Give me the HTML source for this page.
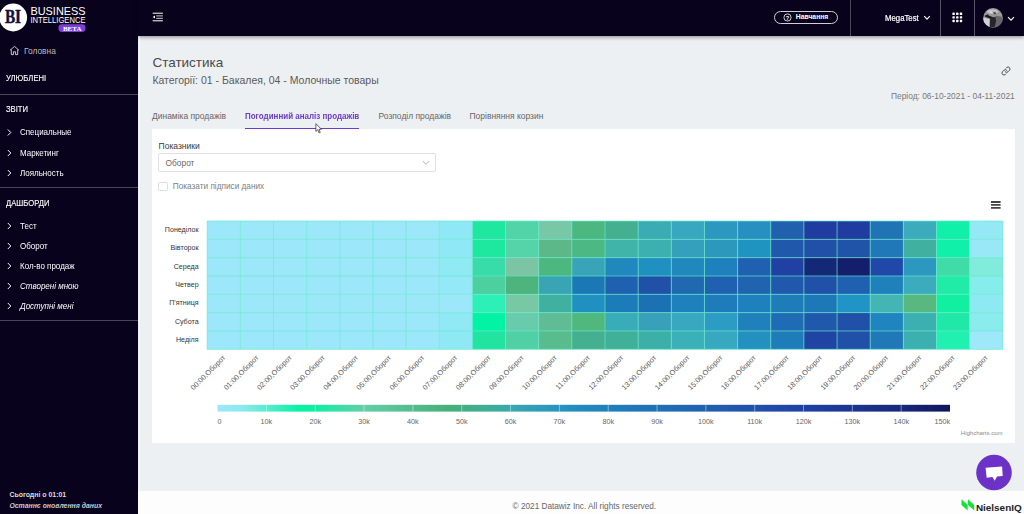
<!DOCTYPE html>
<html lang="uk"><head><meta charset="utf-8"><title>Статистика</title>
<style>
*{box-sizing:border-box;margin:0;padding:0}
html,body{width:1024px;height:514px;overflow:hidden}
body{position:relative;background:#edf0f3;font-family:"Liberation Sans",sans-serif;color:#333;}
.abs{position:absolute;white-space:nowrap}
#side{position:absolute;left:0;top:0;width:138px;height:514px;background:#09021c;color:#fff}
#top{position:absolute;left:138px;top:0;width:886px;height:36px;background:#09021c;box-shadow:0 1px 4px rgba(0,0,0,.45)}
#foot{position:absolute;left:138px;top:490.8px;width:886px;height:24px;background:#fdfdfe}
#card{position:absolute;left:152px;top:129px;width:863.4px;height:314px;background:#fff}
.hm{position:absolute;left:0;top:0}
.yl{font:7.1px "Liberation Sans",sans-serif;fill:#333}
.xl{font:7.35px "Liberation Sans",sans-serif;fill:#555}
.ll{font:7.2px "Liberation Sans",sans-serif;fill:#666}
.hc{font:6px "Liberation Sans",sans-serif;fill:#8a8a8a}
.sep{position:absolute;left:0;width:138px;height:1px;background:#4a4558}
.sh{font-size:8.6px;color:#fff;left:6px;transform:scaleX(.89);transform-origin:0 0;-webkit-text-stroke:.12px #fff}
.si{font-size:8.4px;color:#fff;left:20px;transform:scaleX(.955);transform-origin:0 0;margin-top:-.3px}
.chev{position:absolute;left:7px;width:5px;height:7px}
.tab{font-size:8.47px;color:#666;top:111px}
</style></head><body>

<div id="side">
  <!-- logo -->
  <svg class="abs" style="left:0;top:3px" width="90" height="32" viewBox="0 0 90 32">
    <circle cx="13.2" cy="14.5" r="13.9" fill="#fff"/>
    <text transform="translate(13 20.2) scale(1.02 1.3)" text-anchor="middle" font-family="Liberation Serif,serif" font-weight="bold" font-size="15" fill="#15103a" stroke="#15103a" stroke-width="0.35">BI</text>
    <text x="30.5" y="12" font-family="Liberation Sans,sans-serif" font-size="11.4" fill="#fff" textLength="55" lengthAdjust="spacingAndGlyphs">BUSINESS</text>
    <text x="30.5" y="19.5" font-family="Liberation Sans,sans-serif" font-size="8.8" fill="#fff" textLength="55" lengthAdjust="spacingAndGlyphs">INTELLIGENCE</text>
    <rect x="58.5" y="21.3" width="27" height="7.6" rx="3.4" fill="#7c40d6"/>
    <text x="72.2" y="27.6" text-anchor="middle" font-family="Liberation Serif,serif" font-weight="bold" font-size="7" fill="#fff">BETA</text>
  </svg>
  <svg class="abs" style="left:9px;top:45px" width="11" height="11" viewBox="0 0 11 11"><path d="M1 5.3L5.5 1.4 10 5.3M2.3 4.6V9.6H4.4V6.8H6.6V9.6H8.7V4.6" fill="none" stroke="#ddd" stroke-width="0.9"/></svg>
  <div class="abs" style="left:24px;top:46px;font-size:8.4px;color:#bbb">Головна</div>
  <div class="abs sh" style="top:73.4px">УЛЮБЛЕНІ</div>
  <div class="sep" style="top:94px"></div>
  <div class="abs sh" style="top:104px">ЗВІТИ</div>
  <div class="abs si" style="top:127px">Специальные</div>
  <div class="abs si" style="top:148px">Маркетинг</div>
  <div class="abs si" style="top:168px">Лояльность</div>
  <div class="sep" style="top:187px"></div>
  <div class="abs sh" style="top:198px">ДАШБОРДИ</div>
  <div class="abs si" style="top:221px">Тест</div>
  <div class="abs si" style="top:241px">Оборот</div>
  <div class="abs si" style="top:261px">Кол-во продаж</div>
  <div class="abs si" style="top:281px;font-style:italic">Створені мною</div>
  <div class="abs si" style="top:301px;font-style:italic">Доступні мені</div>
  <div class="sep" style="top:320px"></div>
  <svg class="abs" style="left:0;top:0" width="20" height="320" viewBox="0 0 20 320"><g fill="none" stroke="#fff" stroke-width="1" transform="translate(0.3 0)">
    <path d="M7.5 129.5l3 3-3 3"/><path d="M7.5 150l3 3-3 3"/><path d="M7.5 170l3 3-3 3"/>
    <path d="M7.5 223l3 3-3 3"/><path d="M7.5 243l3 3-3 3"/><path d="M7.5 263l3 3-3 3"/><path d="M7.5 283l3 3-3 3"/><path d="M7.5 303l3 3-3 3"/>
  </g></svg>
  <div class="abs" style="left:9.4px;top:491.3px;font-size:6.95px;font-weight:bold;color:#ddd">Сьогодні о 01:01</div>
  <div class="abs" style="left:9.4px;top:502.3px;font-size:6.9px;font-weight:bold;font-style:italic;color:#ccc">Останнє оновлення даних</div>
</div>

<div id="top">
  <svg class="abs" style="left:14px;top:12px" width="12" height="11" viewBox="0 0 12 11"><path d="M0.7 1.2h10.2M0.7 8.8h10.2" stroke="#fff" stroke-width="1" fill="none"/><path d="M4.2 3.9h6.7M4.2 6.3h6.7" stroke="#e4e4ea" stroke-width="0.9" fill="none"/><path d="M0.7 5.1L3 3.6V6.6z" fill="#fff"/></svg>
  <div class="abs" style="left:636px;top:11px;width:64px;height:13px;border:1px solid #cfcfd6;border-radius:7px"></div>
  <svg class="abs" style="left:644.9px;top:12.9px" width="9" height="9" viewBox="0 0 9 9"><circle cx="4.5" cy="4.5" r="3.6" fill="none" stroke="#fff" stroke-width="0.8"/><text x="4.5" y="6.5" text-anchor="middle" font-size="5.6" font-family="Liberation Sans,sans-serif" font-weight="bold" fill="#fff">?</text></svg>
  <div class="abs" style="left:657.8px;top:13.2px;font-size:6.8px;font-weight:bold;color:#fff">Навчання</div>
  <div class="abs" style="left:712.3px;top:0;width:1.2px;height:36px;background:#4d4859"></div>
  <div class="abs" style="left:746.5px;top:12.8px;font-size:8.5px;color:#fff;transform:scaleX(.915);transform-origin:0 0;-webkit-text-stroke:.2px #fff">MegaTest</div>
  <svg class="abs" style="left:785px;top:15px" width="8" height="6" viewBox="0 0 8 6"><path d="M1.2 1.2l2.8 2.9 2.8-2.9" fill="none" stroke="#fff" stroke-width="1.1"/></svg>
  <div class="abs" style="left:802px;top:0;width:1.3px;height:36px;background:#585468"></div>
  <svg class="abs" style="left:814.3px;top:11.5px" width="11" height="11" viewBox="0 0 11 11"><g fill="#fff"><rect x="0.4" y="0.6" width="2.4" height="2.4" rx="0.6"/><rect x="4.1" y="0.6" width="2.4" height="2.4" rx="0.6"/><rect x="7.8" y="0.6" width="2.4" height="2.4" rx="0.6"/><rect x="0.4" y="4.2" width="2.4" height="2.4" rx="0.6"/><rect x="4.1" y="4.2" width="2.4" height="2.4" rx="0.6"/><rect x="7.8" y="4.2" width="2.4" height="2.4" rx="0.6"/><rect x="0.4" y="7.8" width="2.4" height="2.4" rx="0.6"/><rect x="4.1" y="7.8" width="2.4" height="2.4" rx="0.6"/><rect x="7.8" y="7.8" width="2.4" height="2.4" rx="0.6"/></g></svg>
  <div class="abs" style="left:836px;top:0;width:1.3px;height:36px;background:#585468"></div>
  <svg class="abs" style="left:845.3px;top:7.6px" width="20" height="20" viewBox="0 0 20 20"><defs><clipPath id="av"><circle cx="10" cy="9.9" r="9.8"/></clipPath><filter id="avb" x="-10%" y="-10%" width="120%" height="120%"><feGaussianBlur stdDeviation="0.45"/></filter></defs><g clip-path="url(#av)"><rect width="20" height="20" fill="#9a9a9c"/><g filter="url(#avb)"><ellipse cx="9.5" cy="3.6" rx="5.5" ry="2.4" fill="#c2c2c2"/><path d="M-1 9.6L7.2 11.2 7.8 19 1 19z" fill="#d2d2d4"/><path d="M12.5 7.7L18 8.5 21 13 16.5 19 11.6 19.5z" fill="#66666c"/><path d="M1.6 7.8L5 6.3 5.6 7.5 12.2 9.9 11.8 11.6 6.6 10.6 2.2 8.8z" fill="#1c1c1e"/><path d="M6.9 10.5L12.5 8.7 13.1 13 11.6 19.4 6.6 19.2z" fill="#28282a"/><path d="M9.6 3l1.2 1.6 1.4-1 1 2.4-2.2.4z" fill="#4a4a4c"/><circle cx="8" cy="4.2" r="0.9" fill="#e4e4e4"/></g></g></svg>
  <svg class="abs" style="left:869px;top:15.7px" width="8" height="6" viewBox="0 0 8 6"><path d="M1 1.2l3 3 3-3" fill="none" stroke="#fff" stroke-width="1.1"/></svg>
</div>

<div class="abs" style="left:152.4px;top:54.6px;font-size:13.5px;color:#4a4a4a">Статистика</div>
<div class="abs" style="left:152.4px;top:75.1px;font-size:10.49px;color:#5a5a5a">Категорії: 01 - Бакалея, 04 - Молочные товары</div>
<svg class="abs" style="left:999.5px;top:64.5px" width="12" height="12" viewBox="0 0 12 12"><g fill="none" stroke="#3a3a3a" stroke-width="0.9" stroke-linecap="round"><path d="M5.2 6.8a2 2 0 0 0 2.8 0l1.6-1.6a2 2 0 0 0-2.8-2.8l-.7.7"/><path d="M6.8 5.2a2 2 0 0 0-2.8 0L2.4 6.8a2 2 0 0 0 2.8 2.8l.7-.7"/></g></svg>
<div class="abs" style="right:9.3px;top:91.3px;font-size:8.4px;color:#787878">Період: 06-10-2021 - 04-11-2021</div>

<div class="abs tab" style="left:152px">Динаміка продажів</div>
<div class="abs tab" style="left:245px;color:#6b3cc4;font-weight:bold;font-size:8.9px;top:111.2px;transform:scaleX(.9);transform-origin:0 0">Погодинний аналіз продажів</div>
<div class="abs" style="left:245px;top:127.9px;width:114.2px;height:1.5px;background:#6b3cc4"></div>
<div class="abs tab" style="left:378.5px">Розподіл продажів</div>
<div class="abs tab" style="left:469.5px">Порівняння корзин</div>

<div id="card"></div>
<div class="abs" style="left:158.6px;top:140.8px;font-size:8.5px;color:#3a3a3a">Показники</div>
<div class="abs" style="left:158px;top:152.8px;width:278px;height:19px;border:1px solid #e0e0e0;border-radius:2px;background:#fff"></div>
<div class="abs" style="left:165.5px;top:158px;font-size:8.4px;color:#6a6a6a">Оборот</div>
<svg class="abs" style="left:421.5px;top:159.6px" width="8" height="6" viewBox="0 0 8 6"><path d="M0.8 1l3.2 3.4 3.2-3.4" fill="none" stroke="#adadad" stroke-width="0.9"/></svg>
<div class="abs" style="left:158px;top:182px;width:10px;height:9.4px;border:1px solid #dcdcdc;border-radius:1.5px;background:#fff"></div>
<div class="abs" style="left:172.8px;top:182.2px;font-size:8.24px;color:#808080">Показати підписи даних</div>

<svg class="hm" width="1024" height="514" viewBox="0 0 1024 514">
<rect x="207.20" y="221.00" width="33.15" height="18.33" fill="#9de7fa"/>
<rect x="207.20" y="239.33" width="33.15" height="18.33" fill="#9de7fa"/>
<rect x="207.20" y="257.66" width="33.15" height="18.33" fill="#9de7fa"/>
<rect x="207.20" y="275.99" width="33.15" height="18.33" fill="#9de7fa"/>
<rect x="207.20" y="294.31" width="33.15" height="18.33" fill="#9de7fa"/>
<rect x="207.20" y="312.64" width="33.15" height="18.33" fill="#9de7fa"/>
<rect x="207.20" y="330.97" width="33.15" height="18.33" fill="#9de7fa"/>
<rect x="240.35" y="221.00" width="33.15" height="18.33" fill="#9de7fa"/>
<rect x="240.35" y="239.33" width="33.15" height="18.33" fill="#9de7fa"/>
<rect x="240.35" y="257.66" width="33.15" height="18.33" fill="#9de7fa"/>
<rect x="240.35" y="275.99" width="33.15" height="18.33" fill="#9de7fa"/>
<rect x="240.35" y="294.31" width="33.15" height="18.33" fill="#9de7fa"/>
<rect x="240.35" y="312.64" width="33.15" height="18.33" fill="#9de7fa"/>
<rect x="240.35" y="330.97" width="33.15" height="18.33" fill="#9de7fa"/>
<rect x="273.50" y="221.00" width="33.15" height="18.33" fill="#9de7fa"/>
<rect x="273.50" y="239.33" width="33.15" height="18.33" fill="#9de7fa"/>
<rect x="273.50" y="257.66" width="33.15" height="18.33" fill="#9de7fa"/>
<rect x="273.50" y="275.99" width="33.15" height="18.33" fill="#9de7fa"/>
<rect x="273.50" y="294.31" width="33.15" height="18.33" fill="#9de7fa"/>
<rect x="273.50" y="312.64" width="33.15" height="18.33" fill="#9de7fa"/>
<rect x="273.50" y="330.97" width="33.15" height="18.33" fill="#9de7fa"/>
<rect x="306.65" y="221.00" width="33.15" height="18.33" fill="#9de7fa"/>
<rect x="306.65" y="239.33" width="33.15" height="18.33" fill="#9de7fa"/>
<rect x="306.65" y="257.66" width="33.15" height="18.33" fill="#9de7fa"/>
<rect x="306.65" y="275.99" width="33.15" height="18.33" fill="#9de7fa"/>
<rect x="306.65" y="294.31" width="33.15" height="18.33" fill="#9de7fa"/>
<rect x="306.65" y="312.64" width="33.15" height="18.33" fill="#9de7fa"/>
<rect x="306.65" y="330.97" width="33.15" height="18.33" fill="#9de7fa"/>
<rect x="339.80" y="221.00" width="33.15" height="18.33" fill="#9de7fa"/>
<rect x="339.80" y="239.33" width="33.15" height="18.33" fill="#9de7fa"/>
<rect x="339.80" y="257.66" width="33.15" height="18.33" fill="#9de7fa"/>
<rect x="339.80" y="275.99" width="33.15" height="18.33" fill="#9de7fa"/>
<rect x="339.80" y="294.31" width="33.15" height="18.33" fill="#9de7fa"/>
<rect x="339.80" y="312.64" width="33.15" height="18.33" fill="#9de7fa"/>
<rect x="339.80" y="330.97" width="33.15" height="18.33" fill="#9de7fa"/>
<rect x="372.95" y="221.00" width="33.15" height="18.33" fill="#9de7fa"/>
<rect x="372.95" y="239.33" width="33.15" height="18.33" fill="#9de7fa"/>
<rect x="372.95" y="257.66" width="33.15" height="18.33" fill="#9de7fa"/>
<rect x="372.95" y="275.99" width="33.15" height="18.33" fill="#9de7fa"/>
<rect x="372.95" y="294.31" width="33.15" height="18.33" fill="#9de7fa"/>
<rect x="372.95" y="312.64" width="33.15" height="18.33" fill="#9de7fa"/>
<rect x="372.95" y="330.97" width="33.15" height="18.33" fill="#9de7fa"/>
<rect x="406.10" y="221.00" width="33.15" height="18.33" fill="#9de7fa"/>
<rect x="406.10" y="239.33" width="33.15" height="18.33" fill="#9de7fa"/>
<rect x="406.10" y="257.66" width="33.15" height="18.33" fill="#9de7fa"/>
<rect x="406.10" y="275.99" width="33.15" height="18.33" fill="#9de7fa"/>
<rect x="406.10" y="294.31" width="33.15" height="18.33" fill="#9de7fa"/>
<rect x="406.10" y="312.64" width="33.15" height="18.33" fill="#9de7fa"/>
<rect x="406.10" y="330.97" width="33.15" height="18.33" fill="#9de7fa"/>
<rect x="439.25" y="221.00" width="33.15" height="18.33" fill="#8ee8f5"/>
<rect x="439.25" y="239.33" width="33.15" height="18.33" fill="#8ee8f5"/>
<rect x="439.25" y="257.66" width="33.15" height="18.33" fill="#8feaf3"/>
<rect x="439.25" y="275.99" width="33.15" height="18.33" fill="#94e8f7"/>
<rect x="439.25" y="294.31" width="33.15" height="18.33" fill="#9de7fa"/>
<rect x="439.25" y="312.64" width="33.15" height="18.33" fill="#90e9f5"/>
<rect x="439.25" y="330.97" width="33.15" height="18.33" fill="#8ee9f5"/>
<rect x="472.40" y="221.00" width="33.15" height="18.33" fill="#1ee8a0"/>
<rect x="472.40" y="239.33" width="33.15" height="18.33" fill="#1ee8a0"/>
<rect x="472.40" y="257.66" width="33.15" height="18.33" fill="#38dca8"/>
<rect x="472.40" y="275.99" width="33.15" height="18.33" fill="#4cd0a0"/>
<rect x="472.40" y="294.31" width="33.15" height="18.33" fill="#2cf0b8"/>
<rect x="472.40" y="312.64" width="33.15" height="18.33" fill="#00f4a4"/>
<rect x="472.40" y="330.97" width="33.15" height="18.33" fill="#20e4a0"/>
<rect x="505.55" y="221.00" width="33.15" height="18.33" fill="#50d4a8"/>
<rect x="505.55" y="239.33" width="33.15" height="18.33" fill="#54d4a8"/>
<rect x="505.55" y="257.66" width="33.15" height="18.33" fill="#7cc4a4"/>
<rect x="505.55" y="275.99" width="33.15" height="18.33" fill="#4cb47c"/>
<rect x="505.55" y="294.31" width="33.15" height="18.33" fill="#78c8a4"/>
<rect x="505.55" y="312.64" width="33.15" height="18.33" fill="#68ccac"/>
<rect x="505.55" y="330.97" width="33.15" height="18.33" fill="#50d0a4"/>
<rect x="538.70" y="221.00" width="33.15" height="18.33" fill="#78c8a8"/>
<rect x="538.70" y="239.33" width="33.15" height="18.33" fill="#5cb888"/>
<rect x="538.70" y="257.66" width="33.15" height="18.33" fill="#4cb880"/>
<rect x="538.70" y="275.99" width="33.15" height="18.33" fill="#38a4b4"/>
<rect x="538.70" y="294.31" width="33.15" height="18.33" fill="#40b0a0"/>
<rect x="538.70" y="312.64" width="33.15" height="18.33" fill="#60bc94"/>
<rect x="538.70" y="330.97" width="33.15" height="18.33" fill="#58bc8c"/>
<rect x="571.85" y="221.00" width="33.15" height="18.33" fill="#4cb880"/>
<rect x="571.85" y="239.33" width="33.15" height="18.33" fill="#4cb884"/>
<rect x="571.85" y="257.66" width="33.15" height="18.33" fill="#38a4b8"/>
<rect x="571.85" y="275.99" width="33.15" height="18.33" fill="#1c78b4"/>
<rect x="571.85" y="294.31" width="33.15" height="18.33" fill="#2090c0"/>
<rect x="571.85" y="312.64" width="33.15" height="18.33" fill="#50b87c"/>
<rect x="571.85" y="330.97" width="33.15" height="18.33" fill="#44b090"/>
<rect x="605.00" y="221.00" width="33.15" height="18.33" fill="#44b090"/>
<rect x="605.00" y="239.33" width="33.15" height="18.33" fill="#40b4a8"/>
<rect x="605.00" y="257.66" width="33.15" height="18.33" fill="#2088bc"/>
<rect x="605.00" y="275.99" width="33.15" height="18.33" fill="#2060b0"/>
<rect x="605.00" y="294.31" width="33.15" height="18.33" fill="#1c7cb8"/>
<rect x="605.00" y="312.64" width="33.15" height="18.33" fill="#38acb8"/>
<rect x="605.00" y="330.97" width="33.15" height="18.33" fill="#40b098"/>
<rect x="638.15" y="221.00" width="33.15" height="18.33" fill="#3cacb4"/>
<rect x="638.15" y="239.33" width="33.15" height="18.33" fill="#3cb0b0"/>
<rect x="638.15" y="257.66" width="33.15" height="18.33" fill="#2090c0"/>
<rect x="638.15" y="275.99" width="33.15" height="18.33" fill="#2050a8"/>
<rect x="638.15" y="294.31" width="33.15" height="18.33" fill="#1c70b4"/>
<rect x="638.15" y="312.64" width="33.15" height="18.33" fill="#38a0b8"/>
<rect x="638.15" y="330.97" width="33.15" height="18.33" fill="#3cb0a8"/>
<rect x="671.30" y="221.00" width="33.15" height="18.33" fill="#38a8c0"/>
<rect x="671.30" y="239.33" width="33.15" height="18.33" fill="#34a0bc"/>
<rect x="671.30" y="257.66" width="33.15" height="18.33" fill="#2088bc"/>
<rect x="671.30" y="275.99" width="33.15" height="18.33" fill="#2068b0"/>
<rect x="671.30" y="294.31" width="33.15" height="18.33" fill="#1e80bc"/>
<rect x="671.30" y="312.64" width="33.15" height="18.33" fill="#38a8c0"/>
<rect x="671.30" y="330.97" width="33.15" height="18.33" fill="#3cb0b8"/>
<rect x="704.45" y="221.00" width="33.15" height="18.33" fill="#2c98c0"/>
<rect x="704.45" y="239.33" width="33.15" height="18.33" fill="#2c98bc"/>
<rect x="704.45" y="257.66" width="33.15" height="18.33" fill="#1e80bc"/>
<rect x="704.45" y="275.99" width="33.15" height="18.33" fill="#2060b0"/>
<rect x="704.45" y="294.31" width="33.15" height="18.33" fill="#1e7cbc"/>
<rect x="704.45" y="312.64" width="33.15" height="18.33" fill="#2c9cc4"/>
<rect x="704.45" y="330.97" width="33.15" height="18.33" fill="#38a8c0"/>
<rect x="737.60" y="221.00" width="33.15" height="18.33" fill="#2890c0"/>
<rect x="737.60" y="239.33" width="33.15" height="18.33" fill="#2094c0"/>
<rect x="737.60" y="257.66" width="33.15" height="18.33" fill="#2060b0"/>
<rect x="737.60" y="275.99" width="33.15" height="18.33" fill="#2064b0"/>
<rect x="737.60" y="294.31" width="33.15" height="18.33" fill="#1e80bc"/>
<rect x="737.60" y="312.64" width="33.15" height="18.33" fill="#2080bc"/>
<rect x="737.60" y="330.97" width="33.15" height="18.33" fill="#2490c0"/>
<rect x="770.75" y="221.00" width="33.15" height="18.33" fill="#2060ac"/>
<rect x="770.75" y="239.33" width="33.15" height="18.33" fill="#2058ac"/>
<rect x="770.75" y="257.66" width="33.15" height="18.33" fill="#2040a4"/>
<rect x="770.75" y="275.99" width="33.15" height="18.33" fill="#2058ac"/>
<rect x="770.75" y="294.31" width="33.15" height="18.33" fill="#1e7cb8"/>
<rect x="770.75" y="312.64" width="33.15" height="18.33" fill="#206cb4"/>
<rect x="770.75" y="330.97" width="33.15" height="18.33" fill="#1e7cb8"/>
<rect x="803.90" y="221.00" width="33.15" height="18.33" fill="#203ca0"/>
<rect x="803.90" y="239.33" width="33.15" height="18.33" fill="#2050a8"/>
<rect x="803.90" y="257.66" width="33.15" height="18.33" fill="#142878"/>
<rect x="803.90" y="275.99" width="33.15" height="18.33" fill="#2050a8"/>
<rect x="803.90" y="294.31" width="33.15" height="18.33" fill="#1e78b8"/>
<rect x="803.90" y="312.64" width="33.15" height="18.33" fill="#2058ac"/>
<rect x="803.90" y="330.97" width="33.15" height="18.33" fill="#2044a4"/>
<rect x="837.05" y="221.00" width="33.15" height="18.33" fill="#203ca0"/>
<rect x="837.05" y="239.33" width="33.15" height="18.33" fill="#2054a8"/>
<rect x="837.05" y="257.66" width="33.15" height="18.33" fill="#141e6c"/>
<rect x="837.05" y="275.99" width="33.15" height="18.33" fill="#2060b0"/>
<rect x="837.05" y="294.31" width="33.15" height="18.33" fill="#2094c4"/>
<rect x="837.05" y="312.64" width="33.15" height="18.33" fill="#2050a8"/>
<rect x="837.05" y="330.97" width="33.15" height="18.33" fill="#2050a8"/>
<rect x="870.20" y="221.00" width="33.15" height="18.33" fill="#2074b4"/>
<rect x="870.20" y="239.33" width="33.15" height="18.33" fill="#2078b8"/>
<rect x="870.20" y="257.66" width="33.15" height="18.33" fill="#2048a8"/>
<rect x="870.20" y="275.99" width="33.15" height="18.33" fill="#2080bc"/>
<rect x="870.20" y="294.31" width="33.15" height="18.33" fill="#44b4b4"/>
<rect x="870.20" y="312.64" width="33.15" height="18.33" fill="#2084c0"/>
<rect x="870.20" y="330.97" width="33.15" height="18.33" fill="#2078b8"/>
<rect x="903.35" y="221.00" width="33.15" height="18.33" fill="#3cacbc"/>
<rect x="903.35" y="239.33" width="33.15" height="18.33" fill="#40b0a0"/>
<rect x="903.35" y="257.66" width="33.15" height="18.33" fill="#2c98c0"/>
<rect x="903.35" y="275.99" width="33.15" height="18.33" fill="#3cacbc"/>
<rect x="903.35" y="294.31" width="33.15" height="18.33" fill="#58b880"/>
<rect x="903.35" y="312.64" width="33.15" height="18.33" fill="#3cb0b0"/>
<rect x="903.35" y="330.97" width="33.15" height="18.33" fill="#3cb0b0"/>
<rect x="936.50" y="221.00" width="33.15" height="18.33" fill="#10f0a8"/>
<rect x="936.50" y="239.33" width="33.15" height="18.33" fill="#10f0a8"/>
<rect x="936.50" y="257.66" width="33.15" height="18.33" fill="#40dca8"/>
<rect x="936.50" y="275.99" width="33.15" height="18.33" fill="#20eca8"/>
<rect x="936.50" y="294.31" width="33.15" height="18.33" fill="#10f0a0"/>
<rect x="936.50" y="312.64" width="33.15" height="18.33" fill="#20e8a8"/>
<rect x="936.50" y="330.97" width="33.15" height="18.33" fill="#20f0b0"/>
<rect x="969.65" y="221.00" width="33.15" height="18.33" fill="#95e8f6"/>
<rect x="969.65" y="239.33" width="33.15" height="18.33" fill="#98e8f7"/>
<rect x="969.65" y="257.66" width="33.15" height="18.33" fill="#82ecdc"/>
<rect x="969.65" y="275.99" width="33.15" height="18.33" fill="#86ecec"/>
<rect x="969.65" y="294.31" width="33.15" height="18.33" fill="#8eeaf2"/>
<rect x="969.65" y="312.64" width="33.15" height="18.33" fill="#8aecec"/>
<rect x="969.65" y="330.97" width="33.15" height="18.33" fill="#9ee8f9"/>
<path d="M207.20 221.0V349.3M240.35 221.0V349.3M273.50 221.0V349.3M306.65 221.0V349.3M339.80 221.0V349.3M372.95 221.0V349.3M406.10 221.0V349.3M439.25 221.0V349.3M472.40 221.0V349.3M505.55 221.0V349.3M538.70 221.0V349.3M571.85 221.0V349.3M605.00 221.0V349.3M638.15 221.0V349.3M671.30 221.0V349.3M704.45 221.0V349.3M737.60 221.0V349.3M770.75 221.0V349.3M803.90 221.0V349.3M837.05 221.0V349.3M870.20 221.0V349.3M903.35 221.0V349.3M936.50 221.0V349.3M969.65 221.0V349.3M1002.80 221.0V349.3M207.2 221.00H1002.8M207.2 239.33H1002.8M207.2 257.66H1002.8M207.2 275.99H1002.8M207.2 294.31H1002.8M207.2 312.64H1002.8M207.2 330.97H1002.8M207.2 349.30H1002.8" stroke="#62e8cc" stroke-width="0.9" fill="none" opacity="0.75"/>
<text class="yl" x="198.6" y="232.1" text-anchor="end">Понеділок</text>
<text class="yl" x="198.6" y="250.4" text-anchor="end">Вівторок</text>
<text class="yl" x="198.6" y="268.7" text-anchor="end">Середа</text>
<text class="yl" x="198.6" y="287.0" text-anchor="end">Четвер</text>
<text class="yl" x="198.6" y="305.4" text-anchor="end">П'ятниця</text>
<text class="yl" x="198.6" y="323.7" text-anchor="end">Субота</text>
<text class="yl" x="198.6" y="342.0" text-anchor="end">Неділя</text>
<text class="xl" transform="translate(226.0 358.2) rotate(-45)" text-anchor="end">00:00,Оборот</text>
<text class="xl" transform="translate(259.1 358.2) rotate(-45)" text-anchor="end">01:00,Оборот</text>
<text class="xl" transform="translate(292.3 358.2) rotate(-45)" text-anchor="end">02:00,Оборот</text>
<text class="xl" transform="translate(325.4 358.2) rotate(-45)" text-anchor="end">03:00,Оборот</text>
<text class="xl" transform="translate(358.6 358.2) rotate(-45)" text-anchor="end">04:00,Оборот</text>
<text class="xl" transform="translate(391.7 358.2) rotate(-45)" text-anchor="end">05:00,Оборот</text>
<text class="xl" transform="translate(424.9 358.2) rotate(-45)" text-anchor="end">06:00,Оборот</text>
<text class="xl" transform="translate(458.0 358.2) rotate(-45)" text-anchor="end">07:00,Оборот</text>
<text class="xl" transform="translate(491.2 358.2) rotate(-45)" text-anchor="end">08:00,Оборот</text>
<text class="xl" transform="translate(524.3 358.2) rotate(-45)" text-anchor="end">09:00,Оборот</text>
<text class="xl" transform="translate(557.5 358.2) rotate(-45)" text-anchor="end">10:00,Оборот</text>
<text class="xl" transform="translate(590.6 358.2) rotate(-45)" text-anchor="end">11:00,Оборот</text>
<text class="xl" transform="translate(623.8 358.2) rotate(-45)" text-anchor="end">12:00,Оборот</text>
<text class="xl" transform="translate(656.9 358.2) rotate(-45)" text-anchor="end">13:00,Оборот</text>
<text class="xl" transform="translate(690.1 358.2) rotate(-45)" text-anchor="end">14:00,Оборот</text>
<text class="xl" transform="translate(723.2 358.2) rotate(-45)" text-anchor="end">15:00,Оборот</text>
<text class="xl" transform="translate(756.4 358.2) rotate(-45)" text-anchor="end">16:00,Оборот</text>
<text class="xl" transform="translate(789.5 358.2) rotate(-45)" text-anchor="end">17:00,Оборот</text>
<text class="xl" transform="translate(822.7 358.2) rotate(-45)" text-anchor="end">18:00,Оборот</text>
<text class="xl" transform="translate(855.8 358.2) rotate(-45)" text-anchor="end">19:00,Оборот</text>
<text class="xl" transform="translate(889.0 358.2) rotate(-45)" text-anchor="end">20:00,Оборот</text>
<text class="xl" transform="translate(922.1 358.2) rotate(-45)" text-anchor="end">21:00,Оборот</text>
<text class="xl" transform="translate(955.3 358.2) rotate(-45)" text-anchor="end">22:00,Оборот</text>
<text class="xl" transform="translate(988.4 358.2) rotate(-45)" text-anchor="end">23:00,Оборот</text>
<defs><linearGradient id="lg" x1="0" x2="1" y1="0" y2="0">
<stop offset="0" stop-color="#9de7fa"/>
<stop offset="0.035" stop-color="#8be9ee"/>
<stop offset="0.067" stop-color="#58ecd0"/>
<stop offset="0.11" stop-color="#06f2a3"/>
<stop offset="0.135" stop-color="#10eea4"/>
<stop offset="0.2" stop-color="#62cfa8"/>
<stop offset="0.27" stop-color="#52bb8a"/>
<stop offset="0.315" stop-color="#46b079"/>
<stop offset="0.37" stop-color="#3fae96"/>
<stop offset="0.4" stop-color="#38a8b0"/>
<stop offset="0.47" stop-color="#2693c0"/>
<stop offset="0.533" stop-color="#1e80bc"/>
<stop offset="0.667" stop-color="#2060b0"/>
<stop offset="0.8" stop-color="#2040a4"/>
<stop offset="0.93" stop-color="#18287c"/>
<stop offset="1" stop-color="#10165c"/>
</linearGradient></defs>
<rect x="217.6" y="404.8" width="732.4" height="6.8" fill="url(#lg)"/>
<path d="M266.43 404.8V411.6M315.25 404.8V411.6M364.08 404.8V411.6M412.91 404.8V411.6M461.73 404.8V411.6M510.56 404.8V411.6M559.39 404.8V411.6M608.21 404.8V411.6M657.04 404.8V411.6M705.87 404.8V411.6M754.69 404.8V411.6M803.52 404.8V411.6M852.35 404.8V411.6M901.17 404.8V411.6" stroke="#fff" stroke-opacity="0.55" stroke-width="0.8"/>
<text class="ll" x="217.6" y="424" text-anchor="start">0</text>
<text class="ll" x="266.4" y="424" text-anchor="middle">10k</text>
<text class="ll" x="315.3" y="424" text-anchor="middle">20k</text>
<text class="ll" x="364.1" y="424" text-anchor="middle">30k</text>
<text class="ll" x="412.9" y="424" text-anchor="middle">40k</text>
<text class="ll" x="461.7" y="424" text-anchor="middle">50k</text>
<text class="ll" x="510.6" y="424" text-anchor="middle">60k</text>
<text class="ll" x="559.4" y="424" text-anchor="middle">70k</text>
<text class="ll" x="608.2" y="424" text-anchor="middle">80k</text>
<text class="ll" x="657.0" y="424" text-anchor="middle">90k</text>
<text class="ll" x="705.9" y="424" text-anchor="middle">100k</text>
<text class="ll" x="754.7" y="424" text-anchor="middle">110k</text>
<text class="ll" x="803.5" y="424" text-anchor="middle">120k</text>
<text class="ll" x="852.3" y="424" text-anchor="middle">130k</text>
<text class="ll" x="901.2" y="424" text-anchor="middle">140k</text>
<text class="ll" x="950.0" y="424" text-anchor="end">150k</text>
<text class="hc" x="1002.5" y="434.5" text-anchor="end">Highcharts.com</text>
<path d="M991 202h9.6M991 204.9h9.6M991 207.8h9.6" stroke="#444" stroke-width="1.8"/>
</svg>

<!-- cursor -->
<svg class="abs" style="left:315px;top:123.4px" width="7.9" height="11.4" viewBox="0 0 9 13"><path d="M1 0.8V9.6L3.1 7.7 4.6 11.3 6 10.7 4.5 7.2H7.4z" fill="#fff" stroke="#222" stroke-width="0.8" stroke-linejoin="round"/></svg>

<div class="abs" style="left:138.5px;top:37px;width:1.5px;height:454px;background:rgba(255,255,255,.55)"></div>
<div id="foot"></div>
<div class="abs" style="left:512.6px;top:501.5px;font-size:8.22px;color:#666">© 2021 Datawiz Inc. All rights reserved.</div>
<!-- NielsenIQ -->
<svg class="abs" style="left:954px;top:492px" width="70" height="22" viewBox="0 0 70 22">
  <path d="M7.5 7.3L13.7 12.9V18.5L7.5 12.9z" fill="#12e436"/><path d="M14 7.3L20.2 12.9V18.5L14 12.9z" fill="#12e436"/>
  <text x="21.9" y="18.6" font-family="Liberation Sans,sans-serif" font-weight="bold" font-size="8.7" fill="#1e1e1e" textLength="45.8" lengthAdjust="spacingAndGlyphs">NielsenIQ</text>
</svg>
<!-- chat button -->
<svg class="abs" style="left:974px;top:452px" width="40" height="40" viewBox="0 0 40 40"><circle cx="20" cy="20.5" r="17.8" fill="#6c32c8"/><path d="M11.6 15.8L28.1 14.4L28.7 24L23 24.6L20.7 28.8L18.4 25.1L12.6 25.7z" fill="#fff"/></svg>
</body></html>
